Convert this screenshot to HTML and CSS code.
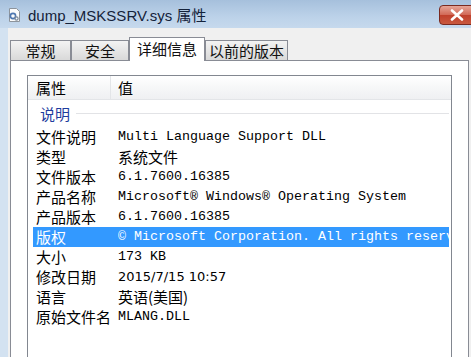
FILE: index.html
```html
<!DOCTYPE html>
<html lang="zh-CN">
<head>
    <meta charset="UTF-8">
    <title>dump_MSKSSRV.sys 属性</title>
    <link rel="stylesheet" href="styles.css">
</head>
<body>

    <div class="window">
        <div class="titlebar">
            <svg class="app-icon" width="13" height="14" viewBox="0 0 13 14">
                <path d="M1.5 0.5h7l3 3v10h-10z" fill="#fbfbfb" stroke="#8d949c"/>
                <circle cx="5" cy="8" r="2.6" fill="none" stroke="#4f78b0" stroke-width="1.6"/>
                <circle cx="8.5" cy="10.5" r="1.6" fill="none" stroke="#7c8a99" stroke-width="1.2"/>
            </svg>
            <span class="title">dump_MSKSSRV.sys 属性</span>
            <div class="close">
                <svg width="14" height="12" viewBox="0 0 14 12">
                    <path d="M2 1.5l10 9M12 1.5l-10 9" stroke="#fff" stroke-width="2.6" stroke-linecap="round"/>
                </svg>
            </div>
        </div>

        <div class="frame">
            <div class="tabs">
                <div class="tab tab-general">常规</div>
                <div class="tab tab-security">安全</div>
                <div class="tab tab-details active">详细信息</div>
                <div class="tab tab-previous">以前的版本</div>
            </div>

            <div class="page">
                <div class="list">
                    <div class="list-head">
                        <div class="col-key">属性</div>
                        <div class="col-val">值</div>
                    </div>

                    <div class="group">
                        <span>说明</span>
                        <i class="rule"></i>
                    </div>

                    <div class="row"><div class="key">文件说明</div><div class="val mono">Multi Language Support DLL</div></div>
                    <div class="row"><div class="key">类型</div><div class="val">系统文件</div></div>
                    <div class="row"><div class="key">文件版本</div><div class="val mono">6.1.7600.16385</div></div>
                    <div class="row"><div class="key">产品名称</div><div class="val mono">Microsoft® Windows® Operating System</div></div>
                    <div class="row"><div class="key">产品版本</div><div class="val mono">6.1.7600.16385</div></div>
                    <div class="row selected"><div class="key">版权</div><div class="val mono">© Microsoft Corporation. All rights reserved.</div></div>
                    <div class="row"><div class="key">大小</div><div class="val mono">173 KB</div></div>
                    <div class="row"><div class="key">修改日期</div><div class="val date">2015/7/15 10:57</div></div>
                    <div class="row"><div class="key">语言</div><div class="val">英语(美国)</div></div>
                    <div class="row"><div class="key">原始文件名</div><div class="val mono">MLANG.DLL</div></div>
                </div>
            </div>
        </div>
    </div>

</body>
</html>
```

FILE: styles.css
```css
body {
    margin: 0;
    width: 471px;
    height: 357px;
    overflow: hidden;
    background: #f0f0f0;
    font-family: "Noto Sans CJK SC", sans-serif;
}

.window {
    height: 357px;
    display: flex;
    flex-direction: column;
    overflow: hidden;
}

.titlebar {
    height: 28px;
    flex: none;
    display: flex;
    align-items: center;
    padding-left: 8px;
    background: linear-gradient(to bottom, #a6c0dc, #bcd2e9 60%, #c6d9ed);
}

.app-icon {
    flex: none;
    margin-top: 2px;
}

.title {
    margin-left: 7px;
    font-family: "Liberation Sans", "Noto Sans CJK SC", sans-serif;
    font-size: 15px;
    color: #14223a;
    white-space: nowrap;
}

.close {
    margin-left: auto;
    margin-right: -10px;
    margin-top: 2px;
    width: 42px;
    height: 20px;
    flex: none;
    display: flex;
    align-items: center;
    justify-content: center;
    padding-right: 6px;
    box-sizing: border-box;
    border: 1px solid #7a2a20;
    border-radius: 4px;
    background: linear-gradient(to bottom, #e6a597, #d26a58 48%, #c0402c 52%, #c9593f);
}

.frame {
    flex: 1;
    display: flex;
    flex-direction: column;
    min-height: 0;
    border-left: 8px solid #d3e2f1;
    padding: 9px 0 0 2px;
}

.tabs {
    display: flex;
    align-items: flex-end;
    height: 24px;
    margin-bottom: -1px;
    position: relative;
    z-index: 1;
}

.tab {
    height: 20px;
    margin-bottom: 1px;
    box-sizing: border-box;
    border: 1px solid #898c95;
    border-bottom: none;
    background: linear-gradient(to bottom, #f3f3f3, #e6e6e6 50%, #d9d9d9);
    font-size: 15px;
    line-height: 19px;
    color: #111;
    text-align: center;
}

.tab-general { width: 61px; }
.tab-security { width: 58px; }
.tab-details { width: 76px; }
.tab-previous { width: 83px; }

.tab.active {
    height: 24px;
    margin-bottom: 0;
    background: #fff;
    line-height: 21px;
}

.page {
    flex: 1;
    min-height: 0;
    display: flex;
    flex-direction: column;
    margin-right: 2px;
    padding: 14px 16px 0 16px;
    border: 1px solid #898c95;
    border-bottom: none;
    background: #fff;
}

.list {
    flex: 1;
    border: 1px solid #828790;
    border-bottom: none;
    background: #fff;
    font-size: 15px;
    color: #000;
}

.list-head {
    display: flex;
    height: 23px;
    border-bottom: 1px solid #e3e5e8;
    background: linear-gradient(to bottom, #ffffff, #f6f7f8 50%, #eff0f2);
    line-height: 23px;
}

.col-key {
    width: 83px;
    box-sizing: border-box;
    padding-left: 8px;
    border-right: 1px solid #e3e5e8;
}

.col-val {
    padding-left: 7px;
}

.group {
    display: flex;
    align-items: center;
    height: 27px;
    padding-left: 12px;
    margin-right: 2px;
    color: #1e3c9e;
}

.rule {
    flex: 1;
    height: 1px;
    margin-left: 6px;
    background: #e2e3e6;
}

.row {
    display: flex;
    height: 20px;
    line-height: 20px;
    margin: 0 2px 0 5px;
    white-space: nowrap;
    overflow: hidden;
}

.key {
    width: 85px;
    flex: none;
    box-sizing: border-box;
    padding-left: 3px;
}

.val {
    overflow: hidden;
}

.mono {
    font-family: "Liberation Mono", "Noto Sans CJK SC", monospace;
    font-size: 13.33px;
}

.date {
    font-family: "DejaVu Sans", sans-serif;
    font-size: 13px;
}

.row.selected {
    background: #3399ff;
    color: #fff;
}
```
